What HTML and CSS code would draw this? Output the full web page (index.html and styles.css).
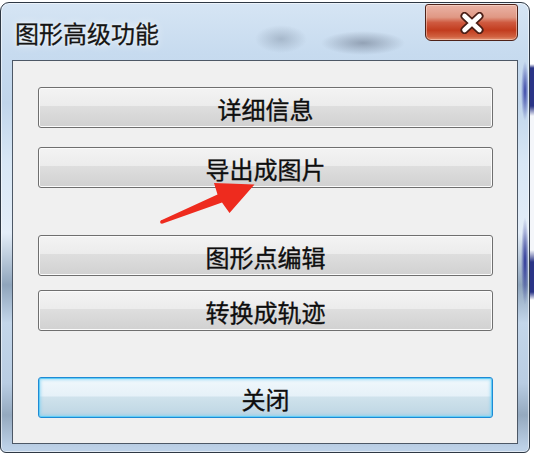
FILE: index.html
```html
<!DOCTYPE html>
<html lang="zh-CN">
<head>
<meta charset="utf-8">
<title>图形高级功能</title>
<link rel="stylesheet" href="styles.css">
</head>
<body>
<div class="screen">
  <div class="window">
    <div class="titlebar">
      <span class="title">图形高级功能</span>
      <div class="close-x">
        <svg width="26" height="22" viewBox="0 0 26 22">
          <path d="M5.5 4 L20.5 18 M20.5 4 L5.5 18" stroke="#4a1e16" stroke-width="8" stroke-linecap="round" fill="none"/>
          <path d="M5.5 4 L20.5 18 M20.5 4 L5.5 18" stroke="#ffffff" stroke-width="4.6" stroke-linecap="round" fill="none"/>
        </svg>
      </div>
    </div>
    <div class="client">
      <div class="btn b1">详细信息</div>
      <div class="btn b2">导出成图片</div>
      <div class="btn b3">图形点编辑</div>
      <div class="btn b4">转换成轨迹</div>
      <div class="btn btn-default b5">关闭</div>
    </div>
  </div>
  <div class="strip"></div>
</div>
<svg class="arrow" width="534" height="458" viewBox="0 0 534 458">
  <polygon points="160.8,220.4 217.5,194.5 214,183 254.5,184.5 229.5,213 222,202.5 162.8,223.6" fill="#ee2b1e"/>
  <circle cx="161.8" cy="222" r="1.7" fill="#ee2b1e"/>
</svg>
</body>
</html>
```
FILE: styles.css
```css
* { box-sizing: border-box; }
html, body { margin: 0; padding: 0; }
body {
  width: 534px;
  height: 458px;
  overflow: hidden;
  background: #ffffff;
  font-family: "Noto Sans CJK SC", "Noto Sans", sans-serif;
  position: relative;
}
.screen {
  display: flex;
  align-items: flex-start;
  height: 458px;
}
.window {
  width: 530px;
  height: 451px;
  margin-top: 2px;
  border: 1px solid #2e3844;
  border-radius: 9px 9px 6px 6px;
  box-shadow: inset 0 0 0 1px rgba(255,255,255,0.55);
  background:
    radial-gradient(ellipse 26px 14px at 280px 36px, rgba(90,105,125,0.32), rgba(90,105,125,0) 100%),
    radial-gradient(ellipse 42px 12px at 362px 40px, rgba(70,80,100,0.42), rgba(70,80,100,0) 100%),
    radial-gradient(ellipse 4px 30px at 524px 88px, rgba(25,35,150,0.8), rgba(25,35,150,0) 100%),
    radial-gradient(ellipse 4px 44px at 524px 258px, rgba(20,28,140,0.85), rgba(20,28,140,0) 100%),
    linear-gradient(180deg, #d6e5f4 0px, #c7dbef 50px, #c0d5eb 100px, #d8e7f5 160px, #e3edf8 230px, #8fa5bc 282px, #c3d6ea 320px, #b9cde3 380px, #94a9bf 412px, #bdd1e7 445px);
  display: flex;
  flex-direction: column;
}
.titlebar {
  height: 57px;
  display: flex;
  justify-content: space-between;
  align-items: flex-start;
}
.title {
  padding: 17px 0 0 14px;
  font-size: 24px;
  line-height: 26px;
  color: #151515;
  -webkit-text-stroke: 0.3px #151515;
  text-shadow: 0 0 8px rgba(255,255,255,0.95), 0 0 3px rgba(255,255,255,0.8);
}
.close-x {
  width: 93px;
  height: 37px;
  margin: 1px 11px 0 0;
  border: 1px solid #4e2219;
  border-radius: 3px 3px 6px 6px;
  background: linear-gradient(180deg, #eab3a6 0%, #e09884 35%, #cf5a40 50%, #c23c1e 72%, #d0603f 90%, #e39272 100%);
  box-shadow: inset 0 0 0 1px rgba(255,235,225,0.45);
  display: flex;
  align-items: center;
  justify-content: center;
}
.close-x svg { display: block; margin-top: 1px; }
.client {
  height: 384px;
  margin: 0 11px;
  border: 1px solid #4d5866;
  background: #f0f0f0;
  display: flex;
  flex-direction: column;
  padding: 26px 24px 0 25px;
}
.btn {
  height: 41px;
  border: 1px solid #6f6f6f;
  border-radius: 3px;
  background: linear-gradient(180deg, #f3f3f3 0%, #ececec 45%, #dedede 47%, #d1d1d1 100%);
  box-shadow: inset 0 0 0 1px #fbfbfb;
  text-align: center;
  font-size: 24px;
  line-height: 39px;
  padding-top: 1px;
  color: #0e0e0e;
  -webkit-text-stroke: 0.35px #0e0e0e;
}
.b2 { margin-top: 19px; }
.b3 { margin-top: 47px; }
.b4 { margin-top: 14px; }
.b5 { margin-top: 46px; }
.btn-default {
  border: 1px solid #1f8ad4;
  background: linear-gradient(180deg, #f1f8fc 0%, #e6f1f8 45%, #cfe2ec 50%, #bdd5e3 100%);
  box-shadow: inset 0 0 0 1px #62cdf6, inset 0 0 3px 2px rgba(120,210,245,0.6);
}
.strip {
  width: 4px;
  height: 458px;
  background: linear-gradient(180deg, #ffffff 0px, #ffffff 64px, #2a3486 68px, #2a3486 106px, #f4f6fa 116px, #f4f6fa 250px, #2a3486 262px, #2a3486 292px, #ffffff 300px, #ffffff 458px);
}
.arrow {
  position: absolute;
  left: 0;
  top: 0;
  pointer-events: none;
}
```
